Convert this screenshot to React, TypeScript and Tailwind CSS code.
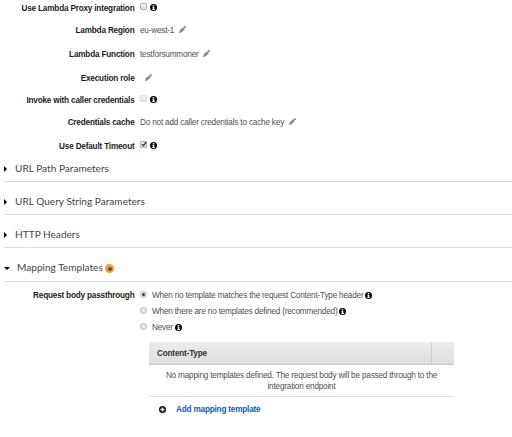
import type { ReactNode } from "react";

const Info = () => (
  <svg viewBox="0 0 14 14" className="h-[7px] w-[7px] shrink-0">
    <circle cx="7" cy="7" r="7" fill="#000" />
    <path d="M5.5 2.2h3v2.2h-3zM4.6 5.4h4v4.4h1.2v2H4.6V9.8h1V7.2h-1z" fill="#fff" />
  </svg>
);

const Pencil = () => (
  <svg viewBox="0 0 14 14" className="-mt-[0.5px] h-[7px] w-[7px] shrink-0">
    <path d="M0.2 13.8 1.2 9.2 8.2 2.2 11.8 5.8 4.8 12.8Z" fill="#8c8c8c" />
    <path d="M9 1.6 10.5 0.4Q11.5 -0.2 12.4 0.6L13.5 1.7Q14.2 2.6 13.5 3.5L12.3 5Z" fill="#808080" />
  </svg>
);

const Check = ({ checked = false, faded = false }: { checked?: boolean; faded?: boolean }) => (
  <span
    className={`flex h-[7px] w-[7px] shrink-0 items-center justify-center rounded-[1px] border bg-gradient-to-b from-[#eeeeee] to-[#dedede] ${
      faded ? "border-[#d6d6d6] opacity-80" : "border-[#b4b4b4]"
    }`}
  >
    {checked && (
      <svg viewBox="0 0 10 10" className="h-[6px] w-[6px] shrink-0">
        <path d="M1.5 5.2 4 7.8 8.8 1.5" fill="none" stroke="#333" strokeWidth="2.2" />
      </svg>
    )}
  </span>
);

const Radio = ({ on = false }: { on?: boolean }) => (
  <span className="-mt-[2px] flex h-[7px] w-[7px] shrink-0 items-center justify-center rounded-full border border-[#b8b8b8] bg-[#e6e6e6]">
    {on && <span className="h-[3px] w-[3px] shrink-0 rounded-full bg-[#404040]" />}
  </span>
);

const Row = ({ label, gap, children }: { label: string; gap: string; children: ReactNode }) => (
  <div className={`flex h-4 items-center ${gap}`}>
    <div className="w-[134.5px] shrink-0 text-right font-bold text-[#1c1c1c]">{label}</div>
    <div className="ml-[5.5px] flex items-center">{children}</div>
  </div>
);

const Toggle = ({ checked, faded }: { checked?: boolean; faded?: boolean }) => (
  <div className="-mt-[2px] flex items-center gap-[2.5px]">
    <div className="-mt-[2px]">
      <Check checked={checked} faded={faded} />
    </div>
    <Info />
  </div>
);

const Value = ({ text }: { text: string }) => (
  <div className="flex items-center gap-[4.5px]">
    <span>{text}</span>
    <Pencil />
  </div>
);

const Section = ({ title, gap }: { title: string; gap: string }) => (
  <div className={`flex h-[25px] items-center border-b border-[#dcdcdc] ${gap}`}>
    <span className="mb-px border-y-[3px] border-l-[3px] border-y-transparent border-l-black" />
    <span className="mb-[2px] ml-2 font-[Lato,sans-serif] text-[10.1px]/[14px] text-[#444]">{title}</span>
  </div>
);

const Choice = ({ text, on }: { text: string; on?: boolean }) => (
  <div className="flex h-4 items-center">
    <Radio on={on} />
    <span className="mr-[2px] ml-[5px]">{text}</span>
    <Info />
  </div>
);

export default function App() {
  return (
    <div className="h-[437px] w-[512px] overflow-hidden bg-white font-['Liberation_Sans',Arial,sans-serif] text-[8.2px]/[11px] tracking-[-0.19px] whitespace-nowrap text-[#505050]">
      <Row label="Use Lambda Proxy integration" gap="mt-0"><Toggle /></Row>
      <Row label="Lambda Region" gap="mt-1.5"><Value text="eu-west-1" /></Row>
      <Row label="Lambda Function" gap="mt-2"><Value text="testforsummoner" /></Row>
      <Row label="Execution role" gap="mt-2"><Value text="" /></Row>
      <Row label="Invoke with caller credentials" gap="mt-1.5"><Toggle faded /></Row>
      <Row label="Credentials cache" gap="mt-1.5"><Value text="Do not add caller credentials to cache key" /></Row>
      <Row label="Use Default Timeout" gap="mt-2"><Toggle checked /></Row>

      <div className="ml-1 tracking-normal">
        <Section title="URL Path Parameters" gap="mt-[3px]" />
        <Section title="URL Query String Parameters" gap="mt-2" />
        <Section title="HTTP Headers" gap="mt-2" />
        <div className="mt-2 flex h-[26px] items-center border-b border-[#dcdcdc]">
          <span className="mb-px border-x-[3px] border-t-[3px] border-x-transparent border-t-black" />
          <span className="mb-[3px] ml-[7px] font-[Lato,sans-serif] text-[10.1px]/[14px] text-[#444]">Mapping Templates</span>
          <span className="ml-[2.5px] flex h-[9px] w-[9px] items-center justify-center rounded-full bg-[#f9a11b]">
            <span className="h-[4px] w-[4px] rounded-full bg-[#3a5577]" />
          </span>
        </div>
      </div>

      <div className="mt-[5px] flex">
        <div className="mt-[3px] w-[134.5px] shrink-0 text-right font-bold text-[#1c1c1c]">Request body passthrough</div>
        <div className="ml-[5.5px]">
          <Choice text="When no template matches the request Content-Type header" on />
          <Choice text="When there are no templates defined (recommended)" />
          <Choice text="Never" />
        </div>
      </div>

      <div className="mt-[7px] ml-[149px] w-[305px]">
        <div className="flex h-[23px] items-center border-b border-[#c8c8c8] bg-gradient-to-b from-[#ececec] to-[#dedede] font-bold text-[#333]">
          <span className="flex-1 pl-2">Content-Type</span>
          <span className="h-full w-[23px] border-l border-[#cccccc]" />
        </div>
        <div className="flex h-[32px] flex-col items-center border-b border-[#dcdcdc] pt-[5px]">
          <span>No mapping templates defined. The request body will be passed through to the</span>
          <span>integration endpoint</span>
        </div>
        <div className="mt-[7px] ml-[10px] flex items-center gap-[10px] font-bold text-[#1158b8]">
          <svg viewBox="0 0 14 14" className="h-[7px] w-[7px]">
            <circle cx="7" cy="7" r="7" fill="#111" />
            <path d="M7 3v8M3 7h8" stroke="#fff" strokeWidth="2.6" />
          </svg>
          <span>Add mapping template</span>
        </div>
      </div>
    </div>
  );
}
